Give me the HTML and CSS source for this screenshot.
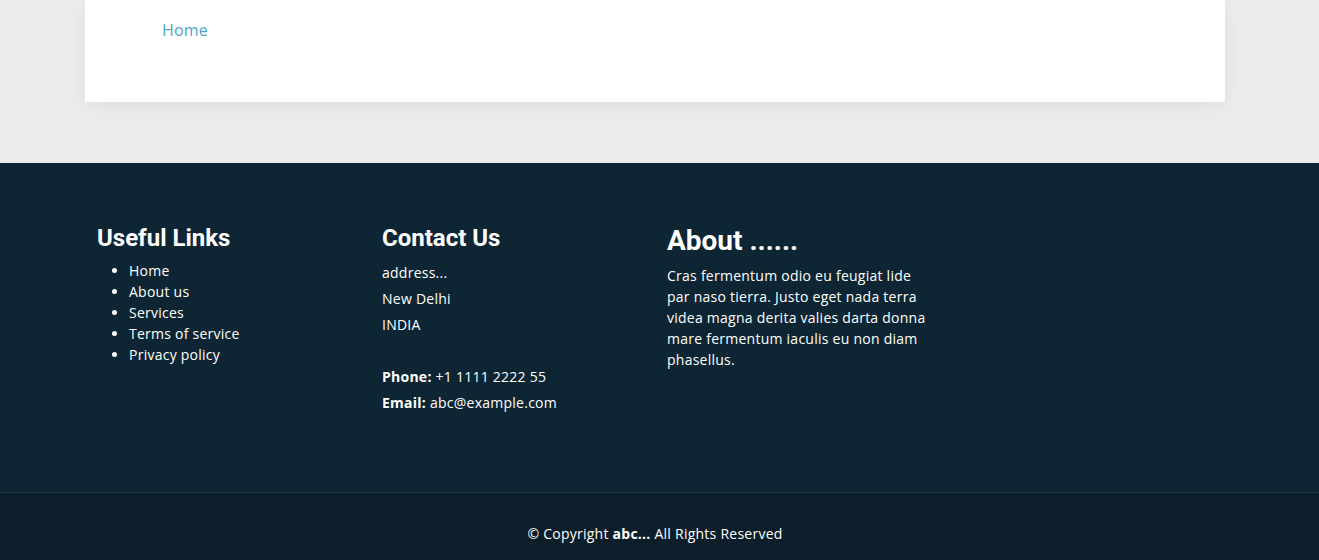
FILE: index.html
```html
<!DOCTYPE html>
<html lang="en">
<head>
<meta charset="utf-8">
<title>Home</title>
<link rel="stylesheet" href="styles.css">
</head>
<body>
<main class="page">
  <section class="card">
    <a class="crumb" href="#">Home</a>
  </section>
</main>
<footer class="footer">
  <div class="footer-top">
    <div class="container">
      <div class="col">
        <h4 class="heading">Useful Links</h4>
        <ul class="links">
          <li><a href="#">Home</a></li>
          <li><a href="#">About us</a></li>
          <li><a href="#">Services</a></li>
          <li><a href="#">Terms of service</a></li>
          <li><a href="#">Privacy policy</a></li>
        </ul>
      </div>
      <div class="col">
        <h4 class="heading">Contact Us</h4>
        <p class="contact">address...<br>New Delhi<br>INDIA<br><br><strong>Phone:</strong> +1 1111 2222 55<br><strong>Email:</strong> abc@example.com</p>
      </div>
      <div class="col">
        <h3 class="heading heading-lg">About ......</h3>
        <p class="about">Cras fermentum odio eu feugiat lide par naso tierra. Justo eget nada terra videa magna derita valies darta donna mare fermentum iaculis eu non diam phasellus.</p>
      </div>
    </div>
  </div>
  <div class="footer-bottom">
    <div class="copyright">&copy; Copyright <strong>abc...</strong> All Rights Reserved</div>
  </div>
</footer>
</body>
</html>
```
FILE: styles.css
```css
* { box-sizing: border-box; }
html, body { margin: 0; padding: 0; }
body {
  background: #ececec;
  font-family: "Open Sans", "Liberation Sans", sans-serif;
  font-size: 14px;
  letter-spacing: 0.25px;
  color: #fff;
}
.page {
  height: 163px;
  display: flex;
  justify-content: center;
  padding-right: 9px;
}
.card {
  width: 1140px;
  height: 102px;
  background: #fff;
  box-shadow: 0 4px 18px rgba(0, 0, 0, 0.06);
  padding: 18px 0 0 77px;
}
.crumb {
  color: #4fa5c9;
  text-decoration: none;
  font-size: 16px;
  line-height: 24px;
  letter-spacing: 0.2px;
}
.footer-top {
  background: #0e2634;
  padding: 61px 9px 76px 0;
  border-bottom: 1px solid #1b3645;
}
.container {
  width: 1140px;
  margin: 0 auto;
  display: flex;
}
.col {
  width: 285px;
  padding: 0 12px;
}
.heading {
  font-family: Roboto, "Liberation Sans", sans-serif;
  font-weight: 700;
  font-size: 24px;
  line-height: 1.2;
  letter-spacing: 0;
  margin: 0 0 7px;
}
.heading-lg {
  font-size: 28px;
  margin-bottom: 7px;
}
.links {
  margin: 0;
  padding-left: 32px;
  line-height: 21px;
}
.links a {
  color: #fff;
  text-decoration: none;
}
.contact {
  margin: 0;
  line-height: 26px;
}
.about {
  margin: 0;
  line-height: 21px;
  width: 261px;
}
.footer-bottom {
  background: #0b1e2a;
  padding: 30px 9px 30px 0;
  text-align: center;
}
.copyright {
  line-height: 21px;
}
```
